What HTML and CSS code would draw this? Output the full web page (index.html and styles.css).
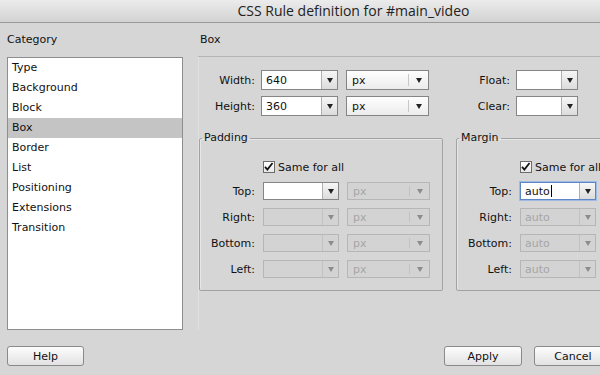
FILE: index.html
```html
<!DOCTYPE html>
<html lang="en">
<head>
    <meta charset="UTF-8">
    <title>CSS Rule definition</title>
    <link rel="stylesheet" href="styles.css">
</head>
<body>
<div class="dialog">
    <div class="titlebar">CSS Rule definition for #main_video</div>
    <div class="main">
        <div class="category">
            <div class="heading">Category</div>
            <ul class="cat-list">
                <li>Type</li>
                <li>Background</li>
                <li>Block</li>
                <li class="selected">Box</li>
                <li>Border</li>
                <li>List</li>
                <li>Positioning</li>
                <li>Extensions</li>
                <li>Transition</li>
            </ul>
        </div>
        <div class="content">
            <div class="heading box-heading">Box</div>
            <div class="panel">
                <div class="size-grid">
                    <label>Width:</label>
                    <div class="combo"><span class="val">640</span><span class="btn"><em></em></span></div>
                    <div class="select"><span class="val">px</span><span class="btn"><em></em></span></div>
                    <label>Float:</label>
                    <div class="combo"><span class="val"></span><span class="btn"><em></em></span></div>

                    <label>Height:</label>
                    <div class="combo"><span class="val">360</span><span class="btn"><em></em></span></div>
                    <div class="select"><span class="val">px</span><span class="btn"><em></em></span></div>
                    <label>Clear:</label>
                    <div class="combo"><span class="val"></span><span class="btn"><em></em></span></div>
                </div>

                <div class="groups">
                    <fieldset class="group">
                        <legend>Padding</legend>
                        <div class="same">
                            <span class="check"><svg width="12" height="12" viewBox="0 0 12 12"><path d="M2.2 5.8 L4.8 8.8 L10.4 1.6" fill="none" stroke="#111" stroke-width="1.9"/></svg></span>
                            Same for all
                        </div>
                        <div class="side-grid">
                            <label>Top:</label>
                            <div class="combo"><span class="val"></span><span class="btn"><em></em></span></div>
                            <div class="select off"><span class="val">px</span><span class="btn"><em></em></span></div>

                            <label>Right:</label>
                            <div class="combo off"><span class="val"></span><span class="btn"><em></em></span></div>
                            <div class="select off"><span class="val">px</span><span class="btn"><em></em></span></div>

                            <label>Bottom:</label>
                            <div class="combo off"><span class="val"></span><span class="btn"><em></em></span></div>
                            <div class="select off"><span class="val">px</span><span class="btn"><em></em></span></div>

                            <label>Left:</label>
                            <div class="combo off"><span class="val"></span><span class="btn"><em></em></span></div>
                            <div class="select off"><span class="val">px</span><span class="btn"><em></em></span></div>
                        </div>
                    </fieldset>

                    <fieldset class="group">
                        <legend>Margin</legend>
                        <div class="same">
                            <span class="check"><svg width="12" height="12" viewBox="0 0 12 12"><path d="M2.2 5.8 L4.8 8.8 L10.4 1.6" fill="none" stroke="#111" stroke-width="1.9"/></svg></span>
                            Same for all
                        </div>
                        <div class="side-grid narrow">
                            <label>Top:</label>
                            <div class="combo focus"><span class="val">auto<i class="caret"></i></span><span class="btn"><em></em></span></div>

                            <label>Right:</label>
                            <div class="combo off"><span class="val">auto</span><span class="btn"><em></em></span></div>

                            <label>Bottom:</label>
                            <div class="combo off"><span class="val">auto</span><span class="btn"><em></em></span></div>

                            <label>Left:</label>
                            <div class="combo off"><span class="val">auto</span><span class="btn"><em></em></span></div>
                        </div>
                    </fieldset>
                </div>
            </div>
        </div>
    </div>
    <div class="footer">
        <button class="button">Help</button>
        <div class="actions">
            <button class="button">Apply</button>
            <button class="button">Cancel</button>
            <button class="button">OK</button>
        </div>
    </div>
</div>
</body>
</html>
```

FILE: styles.css
```css
* {
    margin: 0px;
    padding: 0px;
    box-sizing: border-box;
}

body {
    width: 600px;
    height: 375px;
    overflow: hidden;
    background: #d6d6d6;
    font-family: "DejaVu Sans", sans-serif;
    font-size: 11px;
    color: #111;
}

ul, li {
    list-style: none;
}

.dialog {
    width: 707px;
    height: 375px;
    background: #d6d6d6;
}

.titlebar {
    height: 23px;
    line-height: 22px;
    text-align: center;
    font-family: "Open Sans", sans-serif;
    font-size: 14px;
    color: #222;
    background: linear-gradient(#ececec, #d2d2d2);
    border-bottom: 1px solid #999;
}

.main {
    display: flex;
    padding: 0 5px 0 7px;
}

.heading {
    height: 34px;
    line-height: 34px;
}

.category {
    width: 176px;
}

.cat-list {
    height: 273px;
    background: #fff;
    border: 1px solid #8e8e8e;
}

.cat-list li {
    height: 20px;
    line-height: 20px;
    padding-left: 4px;
}

.cat-list li.selected {
    background: #c4c4c4;
}

.content {
    flex: 1;
    margin-left: 15px;
}

.box-heading {
    padding-left: 2px;
    line-height: 33px;
    border-bottom: 1px solid #b4b4b4;
}

.panel {
    height: 273px;
    border-left: 1px solid #e0e0e0;
}

/* width / height / float / clear */
.size-grid {
    display: grid;
    grid-template-columns: 56px 77px 85px 75px 62px;
    grid-auto-rows: 20px;
    column-gap: 6px;
    row-gap: 6px;
    padding-top: 13px;
}

.size-grid .select {
    margin-left: 2px;
}

label {
    text-align: right;
    align-self: center;
}

/* combo box: editable field plus arrow button */
.combo, .select {
    display: flex;
    border: 1px solid #858585;
    background: #fff;
}

.combo .val, .select .val {
    flex: 1;
    padding-left: 4px;
    display: flex;
    align-items: center;
}

.combo .btn {
    width: 16px;
    border-left: 1px solid #b0b0b0;
    background: linear-gradient(#f6f6f6, #dcdcdc);
    display: flex;
    align-items: center;
    justify-content: center;
}

.select {
    background: linear-gradient(#fefefe, #ececec);
}

.select .val {
    padding-left: 5px;
}

.select .btn {
    width: 20px;
    margin: 3px 0;
    border-left: 1px solid #c8c8c8;
    display: flex;
    align-items: center;
    justify-content: center;
}

.btn em {
    width: 0;
    height: 0;
    border-left: 3.5px solid transparent;
    border-right: 3.5px solid transparent;
    border-top: 5px solid #222;
}

.combo.off, .select.off {
    border-color: #b6b6b6;
    background: #d3d3d3;
    color: #a6a6a6;
}

.combo.off .btn {
    background: #d3d3d3;
    border-left-color: #c2c2c2;
}

.select.off .btn {
    border-left-color: #c2c2c2;
}

.off .btn em {
    border-top-color: #8c8c8c;
}

.combo.focus {
    border-color: #5c86c4;
    box-shadow: 0 0 0 1px #9fbbe3;
}

.caret {
    display: inline-block;
    width: 1px;
    height: 12px;
    margin-left: 1px;
    background: #000;
}

/* padding / margin groups */
.groups {
    display: flex;
    gap: 13px;
    margin-top: 15px;
}

.group {
    width: 244px;
    margin: 0;
    padding: 0 0 12px 0;
    border: 1px solid #a2a2a2;
    border-radius: 2px;
    box-shadow: inset 1px 1px 0 #e6e6e6;
}

.group legend {
    margin-left: 2px;
    padding: 0 2px;
    line-height: 14px;
}

.same {
    display: flex;
    align-items: center;
    gap: 3px;
    height: 12px;
    margin-top: 16px;
    padding-left: 63px;
    white-space: nowrap;
}

.check {
    width: 12px;
    height: 12px;
    border: 1px solid #6c6c6c;
    background: linear-gradient(#fff, #e8e8e8);
    display: flex;
}

.check svg {
    margin: -1px 0 0 -1px;
}

.side-grid {
    display: grid;
    grid-template-columns: 55px 76px 83px;
    grid-auto-rows: 18px;
    column-gap: 8px;
    row-gap: 8px;
    margin-top: 9px;
}

.side-grid.narrow {
    grid-template-columns: 55px 76px;
}

/* footer buttons */
.footer {
    display: flex;
    justify-content: space-between;
    padding: 16px 5px 0 7px;
}

.actions {
    display: flex;
    gap: 12px;
}

.button {
    width: 78px;
    height: 20px;
    font-family: "DejaVu Sans", sans-serif;
    font-size: 11px;
    color: #111;
    border: 1px solid #8a8a8a;
    border-radius: 3px;
    background: linear-gradient(#fdfdfd, #e2e2e2);
}

.footer > .button {
    width: 77px;
}
```
